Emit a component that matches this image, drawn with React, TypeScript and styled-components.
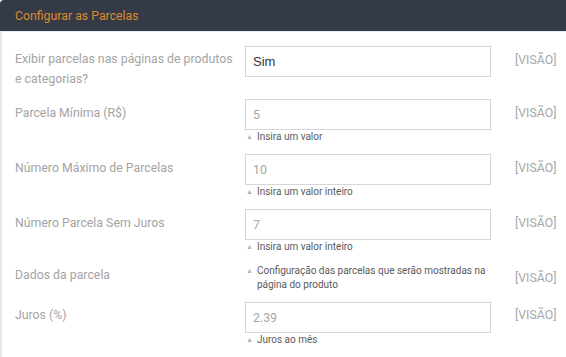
import { createGlobalStyle } from 'styled-components';
import styled from 'styled-components';

const GlobalStyle = createGlobalStyle`
  html, body {
    margin: 0;
    padding: 0;
    background: #fff;
    font-family: Roboto, "Liberation Sans", Arial, sans-serif;
  }
`;

interface OffsetProps {
  $top?: number;
}

interface FieldProps {
  $dark?: boolean;
}

const Panel = styled.section`
  width: 566px;
  height: 357px;
  overflow: hidden;
  border-radius: 4px 0 0 0;
`;

const Header = styled.header`
  height: 31px;
  display: flex;
  align-items: center;
  padding: 0 15px;
  background-color: #343a46;
  border-bottom: 1px solid #e6e8ec;
  color: #dd8a2c;
  font-size: 12.3px;
`;

const Body = styled.div`
  border-left: 2px solid #e4e7eb;
  padding: 14px 0 0 13px;
  height: 100%;
`;

const Row = styled.div`
  display: grid;
  grid-template-columns: 220px 246px auto;
  column-gap: 10px;
  align-items: start;
  margin-bottom: 10px;
`;

const Label = styled.div<OffsetProps>`
  padding-top: ${(props) => props.$top ?? 4}px;
  font-size: 12.3px;
  line-height: 20px;
  color: #a4a4a4;
`;

const Field = styled.div`
  display: flex;
  flex-direction: column;
`;

const Input = styled.input<FieldProps>`
  box-sizing: border-box;
  width: 246px;
  height: 31px;
  margin: 0;
  padding: 0 7px;
  border: 1px solid #d6d6d6;
  border-radius: 0;
  outline: none;
  background: #fff;
  font-family: ${(props) => (props.$dark ? '"Liberation Sans", Arial, sans-serif' : 'Roboto, sans-serif')};
  font-size: ${(props) => (props.$dark ? '13px' : '12.3px')};
  color: ${(props) => (props.$dark ? '#333' : '#a6a6a6')};
`;

const Help = styled.div`
  display: flex;
  gap: 4px;
  padding-left: 1px;
  font-size: 10px;
  line-height: 14px;
  color: #5a5a5a;
`;

const Arrow = styled.span`
  flex: none;
  font-size: 7px;
  color: #b4b4b4;
`;

const Vision = styled.div<OffsetProps>`
  margin-left: 14px;
  padding-top: ${(props) => props.$top ?? 4}px;
  font-size: 12.3px;
  line-height: 20px;
  color: #a8a8a8;
  white-space: nowrap;
`;

interface Setting {
  label: string;
  value?: string;
  dark?: boolean;
  help?: string;
  labelTop?: number;
  visionTop?: number;
}

const settings: Setting[] = [
  { label: 'Exibir parcelas nas páginas de produtos e categorias?', value: 'Sim', dark: true, labelTop: 3 },
  { label: 'Parcela Mínima (R$)', value: '5', help: 'Insira um valor' },
  { label: 'Número Máximo de Parcelas', value: '10', help: 'Insira um valor inteiro' },
  { label: 'Número Parcela Sem Juros', value: '7', help: 'Insira um valor inteiro' },
  {
    label: 'Dados da parcela',
    help: 'Configuração das parcelas que serão mostradas na página do produto',
    labelTop: 1,
    visionTop: 4,
  },
  { label: 'Juros (%)', value: '2.39', help: 'Juros ao mês', labelTop: 3, visionTop: 3 },
];

export default function App() {
  return (
    <>
      <GlobalStyle />
      <Panel>
        <Header>Configurar as Parcelas</Header>
        <Body>
          {settings.map((s) => (
            <Row key={s.label}>
              <Label $top={s.labelTop}>{s.label}</Label>
              <Field>
                {s.value !== undefined && (
                  <Input $dark={s.dark} defaultValue={s.value} readOnly />
                )}
                {s.help && (
                  <Help>
                    <Arrow>▲</Arrow>
                    <span>{s.help}</span>
                  </Help>
                )}
              </Field>
              <Vision $top={s.visionTop}>[VISÃO]</Vision>
            </Row>
          ))}
        </Body>
      </Panel>
    </>
  );
}
